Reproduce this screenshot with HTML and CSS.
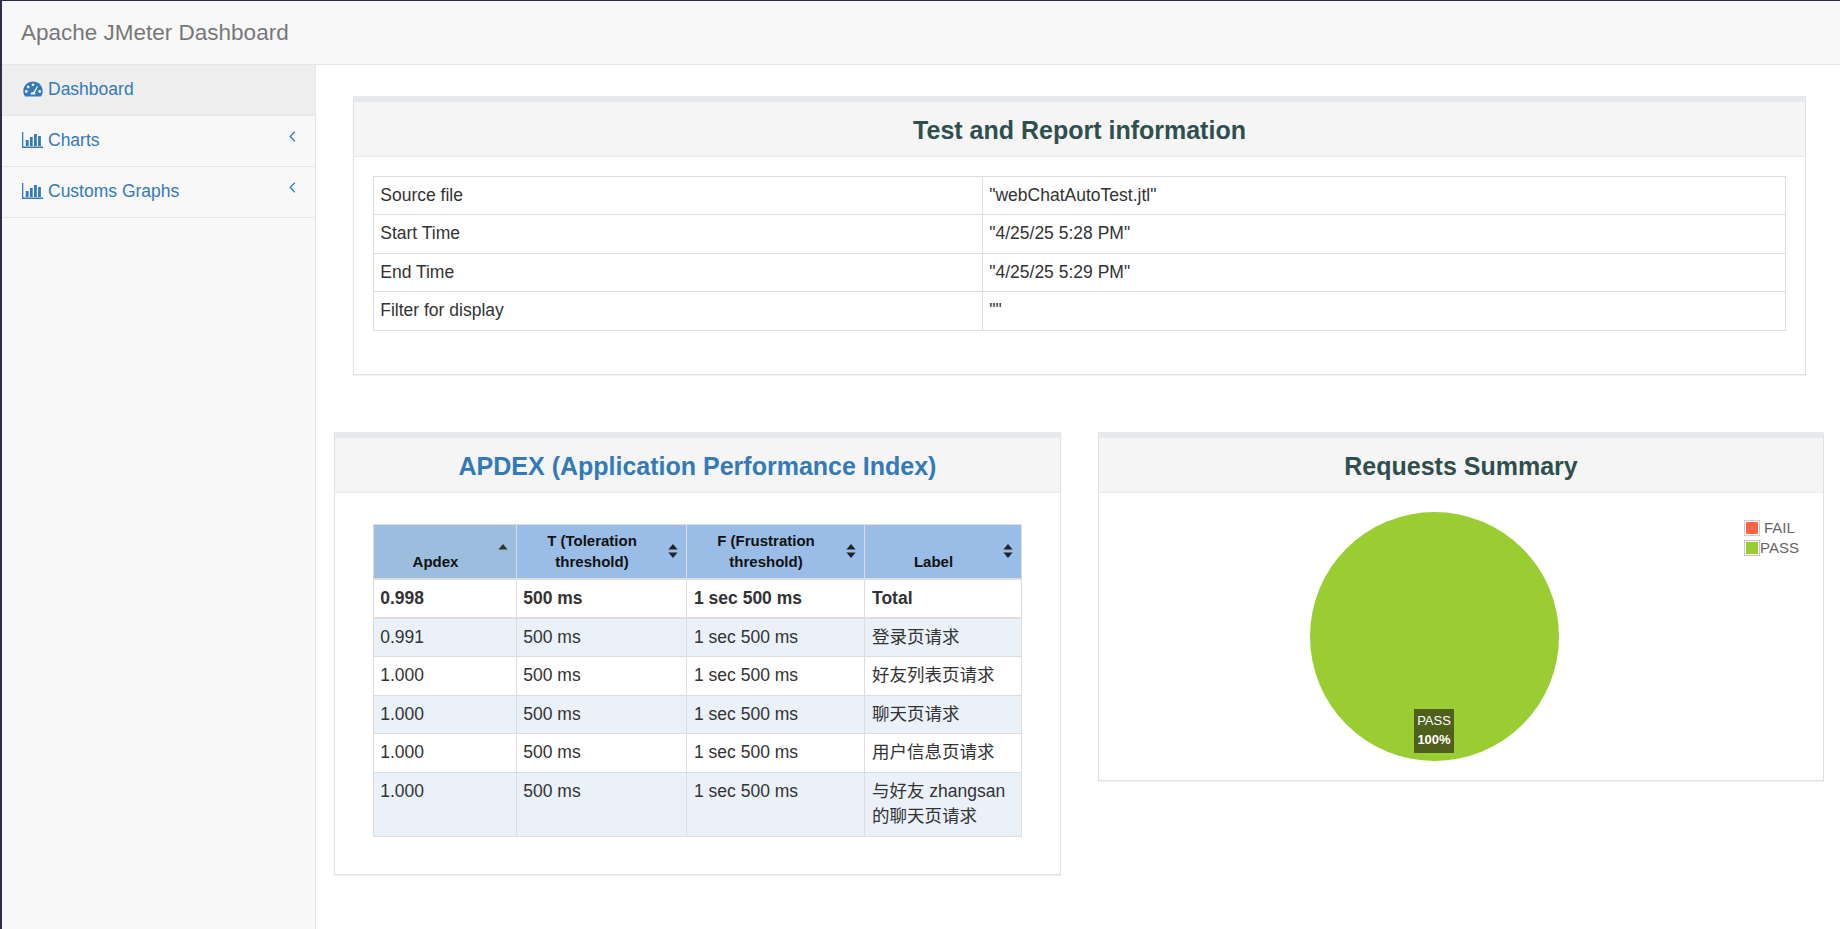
FILE: index.html
```html
<!DOCTYPE html>
<html lang="en">
<head>
<meta charset="utf-8">
<title>Apache JMeter Dashboard</title>
<link rel="stylesheet" href="styles.css">
</head>
<body>
<svg class="defs" width="0" height="0" aria-hidden="true">
  <symbol id="bars" viewBox="0 0 21 16"><path d="M0.6 0v15.3H21" fill="none" stroke="currentColor" stroke-width="1.4"/><path d="M3.8 8h2.8v6H3.8zM7.9 5h2.8v9H7.9zM12 2h2.8v12H12zM16.1 4h2.8v10h-2.8z" fill="currentColor"/></symbol>
  <symbol id="angle" viewBox="0 0 7 11"><path d="M5.8 0.8L1.2 5.5l4.6 4.7" fill="none" stroke="currentColor" stroke-width="1.3"/></symbol>
  <symbol id="sort" viewBox="0 0 10 14"><path d="M5 0l4.6 5.6H0.4zM5 14L0.4 8.4h9.2z" fill="currentColor"/></symbol>
  <symbol id="sort-up" viewBox="0 0 10 14"><path d="M5 0l4.6 5.6H0.4z" fill="currentColor"/></symbol>
</svg>
<header class="navbar"><a class="brand">Apache JMeter Dashboard</a></header>
<div class="layout">
  <nav class="sidebar">
    <a class="nav-item active">
      <svg class="ico gauge" viewBox="0 0 20 16"><path fill-rule="evenodd" fill="currentColor" d="M10 0.5C4.6 0.5 0.3 4.7 0.3 10c0 1.9.5 3.7 1.5 5.2.2.3.5.4.8.4h14.8c.3 0 .6-.1.8-.4 1-1.5 1.5-3.3 1.5-5.2C19.7 4.7 15.4 0.5 10 0.5zM10 2.4a1.4 1.4 0 110 2.8 1.4 1.4 0 010-2.8zM5.2 4.6a1.4 1.4 0 110 2.8 1.4 1.4 0 010-2.8zM3.3 9.1a1.4 1.4 0 110 2.8 1.4 1.4 0 010-2.8zM16.7 9.1a1.4 1.4 0 110 2.8 1.4 1.4 0 010-2.8zM14.1 5l.9.5-3.1 6.2c.5.5.7 1.1.5 1.8H7.6c-.3-1.4.9-2.6 2.4-2.6h.4z"/></svg>
      <span>Dashboard</span>
    </a>
    <a class="nav-item"><svg class="ico"><use href="#bars"/></svg><span>Charts</span><svg class="chev"><use href="#angle"/></svg></a>
    <a class="nav-item"><svg class="ico"><use href="#bars"/></svg><span>Customs Graphs</span><svg class="chev"><use href="#angle"/></svg></a>
  </nav>
  <main class="content">
    <section class="panel panel-info">
      <h2 class="panel-title">Test and Report information</h2>
      <div class="panel-body info-body">
        <table class="grid info-table">
          <tr><td class="info-key">Source file</td><td>"webChatAutoTest.jtl"</td></tr>
          <tr><td>Start Time</td><td>"4/25/25 5:28 PM"</td></tr>
          <tr><td>End Time</td><td>"4/25/25 5:29 PM"</td></tr>
          <tr><td>Filter for display</td><td>""</td></tr>
        </table>
      </div>
    </section>
    <div class="two-col">
      <section class="panel panel-apdex">
        <h2 class="panel-title link-title">APDEX (Application Performance Index)</h2>
        <div class="panel-body apdex-body">
          <table class="grid apdex-table">
            <thead>
              <tr>
                <th class="c1 sorted">Apdex<svg class="sort"><use href="#sort-up"/></svg></th>
                <th class="c2">T (Toleration threshold)<svg class="sort"><use href="#sort"/></svg></th>
                <th class="c3">F (Frustration threshold)<svg class="sort"><use href="#sort"/></svg></th>
                <th class="c4">Label<svg class="sort"><use href="#sort"/></svg></th>
              </tr>
            </thead>
            <tbody>
              <tr class="total"><td>0.998</td><td>500 ms</td><td>1 sec 500 ms</td><td>Total</td></tr>
              <tr class="odd"><td>0.991</td><td>500 ms</td><td>1 sec 500 ms</td><td>登录页请求</td></tr>
              <tr><td>1.000</td><td>500 ms</td><td>1 sec 500 ms</td><td>好友列表页请求</td></tr>
              <tr class="odd"><td>1.000</td><td>500 ms</td><td>1 sec 500 ms</td><td>聊天页请求</td></tr>
              <tr><td>1.000</td><td>500 ms</td><td>1 sec 500 ms</td><td>用户信息页请求</td></tr>
              <tr class="odd last"><td>1.000</td><td>500 ms</td><td>1 sec 500 ms</td><td>与好友 zhangsan 的聊天页请求</td></tr>
            </tbody>
          </table>
        </div>
      </section>
      <section class="panel panel-summary">
        <h2 class="panel-title">Requests Summary</h2>
        <div class="chart">
          <div class="pie"></div>
          <div class="pie-label">PASS<br><b>100%</b></div>
          <ul class="legend">
            <li><i class="swatch fail"></i><span class="fail-text">FAIL</span></li>
            <li><i class="swatch pass"></i><span>PASS</span></li>
          </ul>
        </div>
      </section>
    </div>
  </main>
</div>
</body>
</html>
```
FILE: styles.css
```css
* { box-sizing: border-box; }
html, body { margin: 0; height: 100%; }
body {
  height: 929px;
  overflow: hidden;
  display: flex;
  flex-direction: column;
  border-top: 1px solid #2a2f45;
  border-left: 2px solid #2a2f45;
  background: #fff;
  color: #333;
  font: 17.5px/25px "Liberation Sans", "Noto Sans CJK SC", sans-serif;
}
.defs { position: absolute; }
.navbar {
  height: 64px;
  flex: none;
  display: flex;
  align-items: center;
  padding-left: 19px;
  background: #f8f8f8;
  border-bottom: 1px solid #e7e7e7;
}
.brand { font-size: 22.5px; color: #777; }
.layout { flex: 1; display: flex; min-height: 0; }
.sidebar {
  width: 314px;
  flex: none;
  background: #f8f8f8;
  border-right: 1px solid #e7e7e7;
}
.nav-item {
  height: 51px;
  display: flex;
  align-items: center;
  padding: 0 15px 2px 20px;
  color: #337ab7;
  border-bottom: 1px solid #e7e7e7;
}
.nav-item.active { background: #eee; }
.ico { width: 21px; height: 16px; margin-right: 5px; flex: none; }
.gauge { width: 20px; margin-left: 1px; margin-right: 5px; height: 16px; }
.chev { width: 7px; height: 11px; margin-left: auto; margin-top: -8px; margin-right: 4px; }
.content { flex: 1; min-width: 0; padding: 31px 16px 0 18px; }
.panel {
  background: #fff;
  border: 1px solid #e0e0e0;
  border-top: 6px solid #e7eaec;
  box-shadow: 0 1px 1px rgba(0, 0, 0, .05);
}
.panel-info { margin: 0 18px 0 19px; height: 279px; }
.panel-title {
  margin: 0;
  height: 55px;
  background: #f5f5f5;
  border-bottom: 1px solid #e8e8e8;
  color: #2f4f4f;
  font-size: 25px;
  font-weight: 700;
  line-height: 56px;
  text-align: center;
}
.link-title { color: #337ab7; }
.info-body { padding: 18.5px 19px 0; }
.grid { border-collapse: collapse; table-layout: fixed; width: 100%; }
.grid td, .grid th { border: 1.25px solid #ddd; padding: 6.25px; vertical-align: top; }
.info-table .info-key { width: 609px; }
.two-col {
  display: grid;
  grid-template-columns: 727px 726px;
  column-gap: 37px;
  align-items: start;
  margin-top: 57px;
}
.panel-apdex { height: 443px; }
.apdex-body { padding: 31px 38px 0; }
.apdex-table { width: 648px; }
.apdex-table th {
  position: relative;
  background: #99bde6;
  color: #111;
  font-size: 15px;
  line-height: 21px;
  font-weight: 700;
  text-align: center;
  vertical-align: bottom;
  padding: 5px 25px 6px 6px;
  border-bottom-width: 2px;
}
.apdex-table th.sorted { background: #9dbddf; }
.apdex-table td:nth-child(n+3) { padding-left: 7px; }
.c1 { width: 143px; }
.c2 { width: 170px; }
.c3 { width: 178px; }
.c4 { width: 157px; }
.sort { position: absolute; right: 8px; top: 19px; width: 10px; height: 14px; color: #222; }
.sorted .sort { color: #333; }
.total td { font-weight: 700; border-bottom-width: 2px; padding-top: 5.75px; padding-bottom: 5.75px; }
.odd td { background: #eaf1f9; }
.last td { padding-bottom: 7px; }
.panel-summary { height: 349px; }
.chart { position: relative; height: 288px; }
.pie {
  position: absolute;
  left: 211px;
  top: 19px;
  width: 249px;
  height: 249px;
  border-radius: 50%;
  background: #9acd32;
}
.pie-label {
  position: absolute;
  left: 315px;
  top: 216px;
  width: 40px;
  height: 44px;
  padding-top: 2px;
  background: #4f5f1c;
  color: #fff;
  font-size: 13px;
  line-height: 19px;
  text-align: center;
}
.legend {
  position: absolute;
  left: 645px;
  top: 25px;
  margin: 0;
  padding: 0;
  list-style: none;
  color: #666;
  font-size: 15px;
  line-height: 20px;
}
.legend li { display: flex; align-items: center; }
.swatch { width: 16px; height: 16px; border: 1px solid #ccc; padding: 1px; background-clip: content-box; }
.fail { background-color: #ff6347; margin-right: 4px; }
.pass { background-color: #9acd32; }
```
